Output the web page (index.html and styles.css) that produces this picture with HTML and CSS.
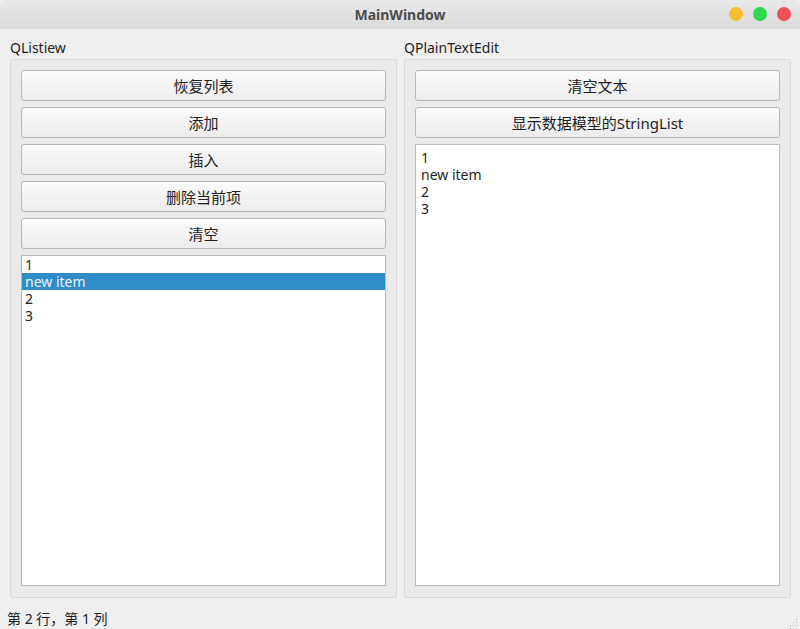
FILE: index.html
```html
<!DOCTYPE html>
<html lang="zh">
  <head>
    <meta charset="UTF-8" />
    <title>MainWindow</title>
    <link rel="stylesheet" href="styles.css">
  </head>
  <body>
    <div class="titlebar">
      <span class="title">MainWindow</span>
      <div class="lights">
        <span class="dot yellow"></span>
        <span class="dot green"></span>
        <span class="dot red"></span>
      </div>
    </div>

    <div class="main">
      <div class="group">
        <div class="group-label">QListiew</div>
        <div class="frame">
          <button class="btn">恢复列表</button>
          <button class="btn">添加</button>
          <button class="btn">插入</button>
          <button class="btn">删除当前项</button>
          <button class="btn">清空</button>
          <div class="listview">
            <div class="item">1</div>
            <div class="item selected">new item</div>
            <div class="item">2</div>
            <div class="item">3</div>
          </div>
        </div>
      </div>

      <div class="group">
        <div class="group-label">QPlainTextEdit</div>
        <div class="frame">
          <button class="btn">清空文本</button>
          <button class="btn">显示数据模型的StringList</button>
          <div class="textedit">
            <div class="line">1</div>
            <div class="line">new item</div>
            <div class="line">2</div>
            <div class="line">3</div>
          </div>
        </div>
      </div>
    </div>

    <div class="statusbar">
      <span>第 2 行，第 1 列</span>
      <svg class="grip" width="10" height="10" viewBox="0 0 10 10">
        <rect x="8" y="0" width="1" height="1" fill="#b5b5b5"/>
        <rect x="5" y="3" width="1" height="1" fill="#b5b5b5"/>
        <rect x="8" y="3" width="1" height="1" fill="#b5b5b5"/>
        <rect x="2" y="6" width="1" height="1" fill="#b5b5b5"/>
        <rect x="5" y="6" width="1" height="1" fill="#b5b5b5"/>
        <rect x="8" y="6" width="1" height="1" fill="#b5b5b5"/>
        <rect x="2" y="9" width="1" height="1" fill="#b5b5b5"/>
        <rect x="5" y="9" width="1" height="1" fill="#b5b5b5"/>
        <rect x="8" y="9" width="1" height="1" fill="#b5b5b5"/>
      </svg>
    </div>
  </body>
</html>
```

FILE: styles.css
```css
html, body {
  margin: 0;
  height: 629px;
  overflow: hidden;
}

body {
  font-family: "Noto Sans", "Noto Sans CJK SC", sans-serif;
  font-size: 14px;
  color: #1e1e1e;
  background-color: #efefef;
  display: flex;
  flex-direction: column;
}

/* window title bar */
.titlebar {
  height: 29px;
  flex: none;
  display: flex;
  align-items: center;
  justify-content: center;
  position: relative;
  background: linear-gradient(#e9e9e9, #dadada);
  border-radius: 6px 6px 0 0;
}
.title {
  font-weight: bold;
  font-size: 14px;
  color: #4c4c4c;
}
.lights {
  position: absolute;
  right: 9px;
  top: 7px;
  display: flex;
  gap: 10px;
}
.dot {
  width: 14px;
  height: 14px;
  border-radius: 50%;
}
.yellow { background-color: #f6be30; }
.green  { background-color: #30d84b; }
.red    { background-color: #ef4f59; }

/* two group boxes */
.main {
  flex: 1;
  display: flex;
  gap: 7px;
  padding: 9px 9px 0 10px;
}
.group {
  flex: 1;
  display: flex;
  flex-direction: column;
}
.group-label {
  height: 20px;
  line-height: 20px;
  margin-bottom: 1px;
  font-size: 14px;
}
.frame {
  height: 516px;
  border: 1px solid #d9d9d9;
  border-radius: 2px;
  background-color: #eaeaea;
  padding: 10px 10px 11px 10px;
  display: flex;
  flex-direction: column;
  gap: 6px;
}

.btn {
  height: 31px;
  flex: none;
  font-family: inherit;
  font-size: 15px;
  color: #1e1e1e;
  border: 1px solid #b8b8b8;
  border-radius: 3px;
  background: linear-gradient(#fbfbfb, #ececec);
  padding: 0;
}

.listview,
.textedit {
  flex: 1;
  background-color: #fff;
  border: 1px solid #b9b9b9;
  font-size: 14px;
}
.listview .item {
  height: 17px;
  line-height: 17px;
  padding-left: 3px;
}
.listview .selected {
  background-color: #308cc6;
  color: #eaf3f9;
}

.textedit {
  padding: 4px 4px;
}
.textedit .line {
  height: 17px;
  line-height: 17px;
  padding-left: 1px;
}

/* status bar */
.statusbar {
  height: 32px;
  flex: none;
  display: flex;
  align-items: flex-end;
  justify-content: space-between;
  padding: 0 2px 1px 7px;
  font-size: 14px;
}
.statusbar span {
  line-height: 22px;
}
.grip {
  margin-bottom: 1px;
}
```
